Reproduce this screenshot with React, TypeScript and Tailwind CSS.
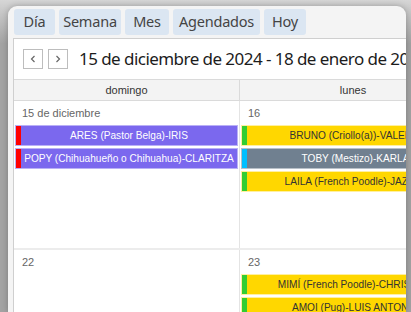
import React from "react";

type Ev = { text: string; bar: string; bg: string; border: string; color: string };

const purple = { bar: "bg-[#ff0000]", bg: "bg-[#7b68ee]", border: "border-[#b9b0f6]", color: "text-white" };
const yellow = { bar: "bg-[#32cd32]", bg: "bg-[#ffd700]", border: "border-[#fff0a0]", color: "text-[#333333]" };
const slate = { bar: "bg-[#00bfff]", bg: "bg-[#708090]", border: "border-[#b8c0c8]", color: "text-white" };

const Event = ({ e }: { e: Ev }) => (
  <div className={`mx-[1px] mb-[2px] flex h-[21px] border ${e.border}`}>
    <div className={`w-[5px] shrink-0 ${e.bar}`} />
    <div
      className={`flex flex-1 items-center justify-center overflow-hidden whitespace-nowrap text-[10.1px] ${e.bg} ${e.color}`}
    >
      {e.text}
    </div>
  </div>
);

const Cell = ({ date, events, last }: { date: string; events: Ev[]; last?: boolean }) => (
  <div className={`w-[226px] shrink-0 ${last ? "" : "border-r border-[#e4e4e4]"}`}>
    <div className="flex h-[24px] items-center pl-[8px] text-[11px] text-[#666666]">{date}</div>
    {events.map((e, i) => (
      <Event key={i} e={e} />
    ))}
  </div>
);

const tabs: [string, string][] = [
  ["Día", "w-[41px]"],
  ["Semana", "w-[62px]"],
  ["Mes", "w-[44px]"],
  ["Agendados", "w-[87px]"],
  ["Hoy", "w-[42px]"],
];

export default function App() {
  const font = { fontFamily: '"Noto Sans", "Open Sans", sans-serif' };
  const small = { fontFamily: '"Liberation Sans", Arial, sans-serif' };
  return (
    <div
      className="h-[312px] w-[411px] overflow-hidden bg-linear-to-b from-[#d6d6d6] to-[#a3a3a3] to-[14%]"
      style={font}
    >
      <div className="ml-[8px] mt-[6px] flex h-[306px] w-[398px] flex-col overflow-hidden rounded-t-[9px] bg-[#f4f4f4] pl-[5px] pt-[3px] shadow-[0_0_6px_rgba(0,0,0,0.25)]">
        <div className="flex gap-[4px] pl-[1px]">
          {tabs.map(([t, w]) => (
            <div
              key={t}
              className={`flex h-[26px] items-center justify-center rounded-[3px] bg-[#dbe6f2] text-[14.5px] tracking-[-0.2px] text-[#444444] ${w}`}
            >
              {t}
            </div>
          ))}
        </div>
        <div className="mt-[3px] flex-1 overflow-hidden border-l border-t border-[#cfcfcf] bg-white">
          <div className="flex h-[40px] items-center overflow-hidden whitespace-nowrap pl-[9px]">
            <div className="flex h-[20px] w-[20px] shrink-0 items-center justify-center border border-[#bdbdbd] bg-white">
              <svg width="10" height="10" viewBox="0 0 10 10">
                <polyline points="6.5,2 3.5,5 6.5,8" fill="none" stroke="#666" strokeWidth="1.2" />
              </svg>
            </div>
            <div className="ml-[5px] flex h-[20px] w-[20px] shrink-0 items-center justify-center border border-[#bdbdbd] bg-white">
              <svg width="10" height="10" viewBox="0 0 10 10">
                <polyline points="3.5,2 6.5,5 3.5,8" fill="none" stroke="#666" strokeWidth="1.2" />
              </svg>
            </div>
            <div className="ml-[11px] shrink-0 text-[17px] tracking-[-0.55px] text-[#1c1c1c]">
              15 de diciembre de 2024 - 18 de enero de 2025
            </div>
          </div>
          <div className="flex h-[22px] border-b border-t border-[#dadada] bg-[#f3f3f3] text-[11px] text-[#333333]" style={small}>
            <div className="flex w-[226px] shrink-0 items-center justify-center border-r border-[#dadada]">domingo</div>
            <div className="flex w-[226px] shrink-0 items-center justify-center">lunes</div>
          </div>
          <div style={small}>
            <div className="flex h-[149px] border-b-2 border-[#ececec]">
              <Cell
                date="15 de diciembre"
                events={[
                  { text: "ARES (Pastor Belga)-IRIS", ...purple },
                  { text: "POPY (Chihuahueño o Chihuahua)-CLARITZA", ...purple },
                ]}
              />
              <Cell
                date="16"
                last
                events={[
                  { text: "BRUNO (Criollo(a))-VALERIA", ...yellow },
                  { text: "TOBY (Mestizo)-KARLA", ...slate },
                  { text: "LAILA (French Poodle)-JAZMÍN", ...yellow },
                ]}
              />
            </div>
            <div className="flex h-[149px]">
              <Cell date="22" events={[]} />
              <Cell
                date="23"
                last
                events={[
                  { text: "MIMÍ (French Poodle)-CHRISTIAN", ...yellow },
                  { text: "AMOI (Pug)-LUIS ANTONIO", ...yellow },
                ]}
              />
            </div>
          </div>
        </div>
      </div>
    </div>
  );
}
